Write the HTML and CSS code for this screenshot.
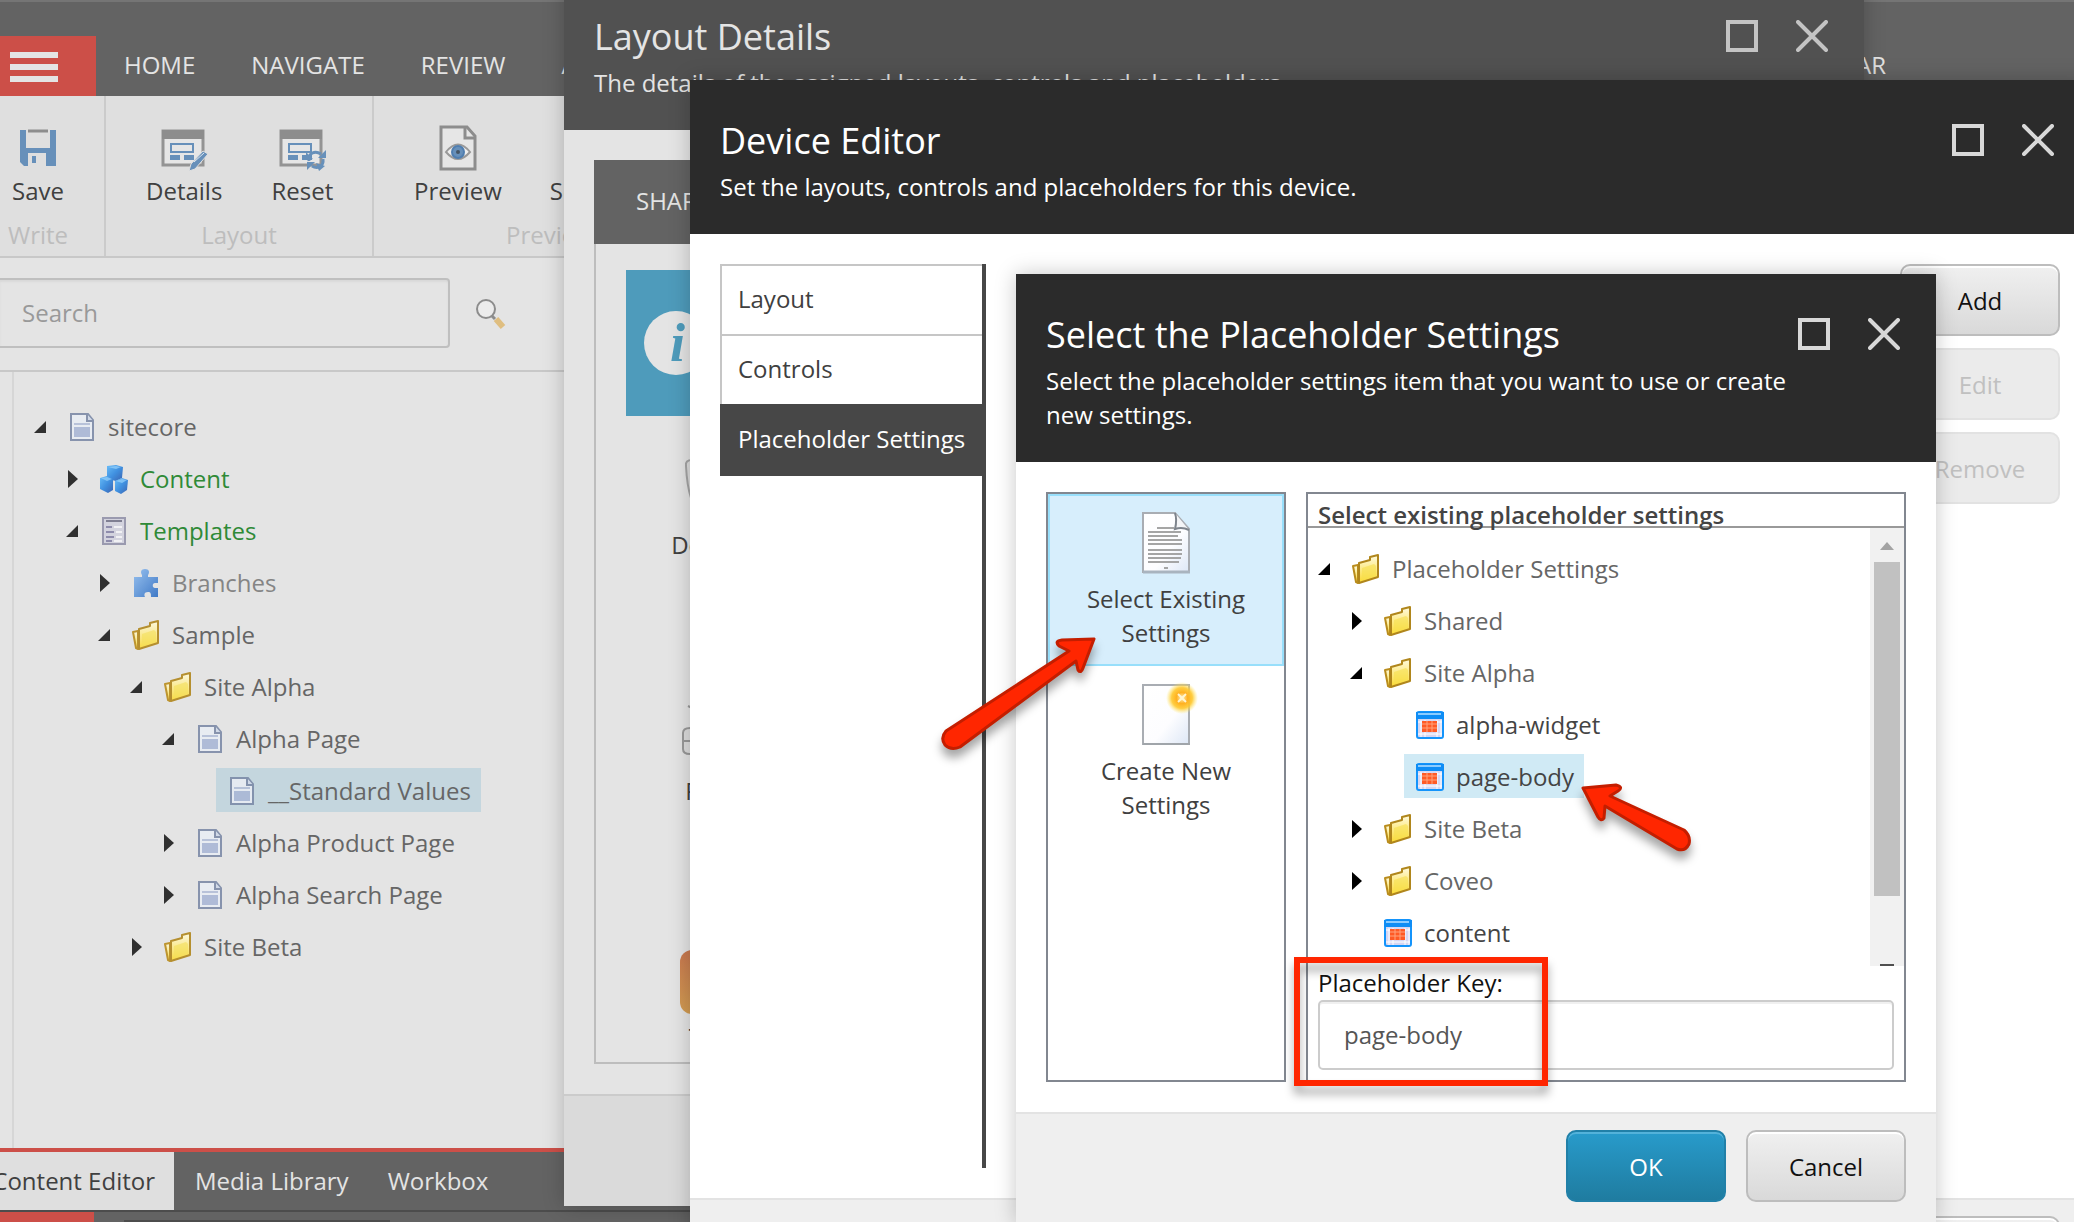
FILE: index.html
```html
<!DOCTYPE html>
<html lang="en">
<head>
<meta charset="utf-8">
<title>Content Editor</title>
<link rel="stylesheet" href="styles.css">
</head>
<body>
<svg class="sprite" aria-hidden="true">
  <defs>
    <linearGradient id="gold" x1="0" y1="0" x2="0" y2="1"><stop offset="0" stop-color="#fffbe0"/><stop offset="1" stop-color="#fbd92e"/></linearGradient>
    <linearGradient id="sheet" x1="0" y1="0" x2="1" y2="1"><stop offset="0" stop-color="#fff"/><stop offset=".6" stop-color="#fdfdff"/><stop offset="1" stop-color="#dde7f6"/></linearGradient>
    <linearGradient id="cube" x1="0" y1="0" x2="1" y2="1"><stop offset="0" stop-color="#5cb8fa"/><stop offset=".5" stop-color="#2f88e0"/><stop offset="1" stop-color="#2a56ac"/></linearGradient>
    <linearGradient id="piece" x1="0" y1="0" x2="1" y2="1"><stop offset="0" stop-color="#8fbdf0"/><stop offset="1" stop-color="#2f6fc4"/></linearGradient>
    <radialGradient id="glow"><stop offset="0" stop-color="#fff3c0"/><stop offset=".35" stop-color="#ffb020"/><stop offset=".65" stop-color="#ffc82c" stop-opacity=".9"/><stop offset="1" stop-color="#ffe96a" stop-opacity="0"/></radialGradient>
    <linearGradient id="amber" x1="0" y1="0" x2="0" y2="1"><stop offset="0" stop-color="#c8784f"/><stop offset="1" stop-color="#d29c52"/></linearGradient>
  </defs>
  <symbol id="open" viewBox="0 0 12 18"><path d="M12 3v12H0z"/></symbol>
  <symbol id="closed" viewBox="0 0 12 18"><path d="M2 0v18l10-9z"/></symbol>
  <symbol id="page" viewBox="0 0 32 32"><path d="M5 3h17l5 6v20H5z" fill="#e9edf4" stroke="#7d8ba8" stroke-width="2"/><path d="M21 3v7h6" fill="#cfd8e8" stroke="#7d8ba8" stroke-width="2"/><path d="M8 13h16" stroke="#b4bfd8" stroke-width="2"/><path d="M8 16h16v10H8z" fill="#aab7d6"/></symbol>
  <symbol id="folder" viewBox="0 0 32 32"><path d="M3 13l5-1v18l-2-1z" fill="url(#gold)" stroke="#b98c1c" stroke-width="2" stroke-linejoin="round"/><path d="M9 10l11-3V4l8-2v22L9 30z" fill="url(#gold)" stroke="#b0861c" stroke-width="2" stroke-linejoin="round"/><path d="M12 15l12-4 2 2v10l-14 4z" fill="#f7df4c" opacity=".6"/></symbol>
  <symbol id="placeholder" viewBox="2 0 32 32"><rect x="5" y="3" width="26" height="26" rx="2" fill="#d6d6f2" stroke="#1494fb" stroke-width="2"/><path d="M4 3h28v7H4z" fill="#0f8df5"/><path d="M6 4h23v2H6z" fill="#8cccff"/><path d="M9 11v17M13 11v17M25 11v17M29 11v17M6 13h24M6 25h24" stroke="#fff" stroke-width="1"/><path d="M10 12h15v11H10z" fill="#ff5a26"/><path d="M15 12v11M20 12v11M10 15h15M10 19h15" stroke="#ffa27c"/></symbol>
  <symbol id="cubes" viewBox="0 0 32 32"><path d="M9 3l9-1 7 2-1 11-6 3-9-2z" fill="url(#cube)"/><path d="M2 15l7-2 6 3v11l-5 3-8-4z" fill="url(#cube)"/><path d="M17 18l7-3 6 2-1 10-6 4-6-3z" fill="url(#cube)"/><path d="M10 4l8-1 5 1-5 2zM3 15l6-1 5 2-5 2zM18 18l6-2 5 1-5 3z" fill="#8fd0ff" opacity=".7"/></symbol>
  <symbol id="template" viewBox="0 0 32 32"><path d="M5 3h22v26H5z" fill="#d2d2de" stroke="#9392aa" stroke-width="2"/><path d="M8 6h16" stroke="#75758a" stroke-width="2"/><path d="M8 12h6M8 17h8M8 22h8M8 26h6" stroke="#8583a6" stroke-width="2"/><path d="M16 12h8M18 17h6M18 22h6M16 26h8" stroke="#f3f3f6" stroke-width="2"/></symbol>
  <symbol id="puzzle" viewBox="0 0 32 32"><path d="M4 10h8V8c-2-3-1-6 3-6s5 3 3 6v2h10v6h-3c-3 0-3 5 0 5h3v9h-7c0-3 0-5-3-5-4 0-4 3-3 5H4z" fill="url(#piece)"/></symbol>
  <symbol id="save" viewBox="0 0 48 48"><path d="M6 6h36v36H10l-4-4z" fill="#6790ba"/><path d="M12 6h24v18H12zM14 29h18v13H14z" fill="#dfdfdf"/><path d="M14 7h20" stroke="#8d8d8d" stroke-width="3"/><path d="M18 32h4v7h-4zM32 28h3v14h-3z" fill="#6790ba"/></symbol>
  <symbol id="layout" viewBox="0 0 48 48"><path d="M3 7h40v34H3z" fill="#e6e6e6" stroke="#949494" stroke-width="3"/><path d="M2 6h42v9H2z" fill="#8d8d8d"/><path d="M11 20h22v8H11z" fill="#e6e6e6" stroke="#6790ba" stroke-width="2"/><path d="M10 31h10v5H10zM24 31h10v5H24z" fill="#6790ba"/></symbol>
  <symbol id="pencil" viewBox="0 0 48 48"><path d="M43 27l5 3-13 15-6 2 2-7z" fill="#6790ba" stroke="#dfdfdf" stroke-width="1"/><path d="M34 38l10-9" stroke="#dfe8f0"/></symbol>
  <symbol id="refresh" viewBox="0 0 48 48"><path d="M31 37c-1-8 6-11 12-7M45 35c1 8-6 10-11 7" fill="none" stroke="#6790ba" stroke-width="3"/><path d="M40 34h8v-8zM37 38h-8v8zM28 28l7 7-7 1zM41 47l-3-8 9 3z" fill="#6790ba"/></symbol>
  <symbol id="preview" viewBox="0 0 48 48"><path d="M7 3h26l8 9v33H7z" fill="#e6e6e6" stroke="#8d8d8d" stroke-width="3"/><path d="M31 3v11h10" fill="none" stroke="#8d8d8d" stroke-width="3"/><path d="M12 28q12-15 24 0-12 14-24 0z" fill="#eee" stroke="#999" stroke-width="2"/><circle cx="24" cy="28" r="6" fill="#6790ba" stroke="#4f7eb0" stroke-width="2"/><circle cx="24" cy="28" r="2" fill="#456"/></symbol>
  <symbol id="lens" viewBox="0 0 32 32"><circle cx="12" cy="12" r="9" fill="#ececec" stroke="#8c8c8c" stroke-width="2"/><path d="M22 22l7 8" stroke="#dfbe80" stroke-width="6"/><path d="M18 19l3 3" stroke="#8c8c8c" stroke-width="3"/></symbol>
  <symbol id="max" viewBox="0 0 32 32"><path d="M2 2h28v28H2z" fill="none" stroke="currentColor" stroke-width="4"/></symbol>
  <symbol id="close" viewBox="0 0 32 32"><path d="M2 2l28 28M30 2L2 30" fill="none" stroke="currentColor" stroke-width="4" stroke-linecap="round"/></symbol>
  <symbol id="existing" viewBox="0 0 64 64"><path d="M9 3h32l14 16v43H9z" fill="url(#sheet)" stroke="#a9adb3" stroke-width="2"/><path d="M9 62h47" stroke="#a9b4bf" stroke-width="3"/><path d="M41 3c2 6 1 12 0 16 6-2 10-1 14 1" fill="#f4f5f7" stroke="#7e848c" stroke-width="2"/><path d="M23 18h17M14 22h33M14 26h30M14 30h34M14 34h34M14 40h34M14 44h34M14 48h33M14 52h31M30 58h4" stroke="#a5a5a5" stroke-width="2"/></symbol>
  <symbol id="create" viewBox="0 0 64 64"><path d="M9 3h46v59H9z" fill="url(#sheet)" stroke="#a9adb3" stroke-width="2"/><path d="M9 62h47" stroke="#a0a5aa" stroke-width="2"/><circle cx="48" cy="16" r="16" fill="url(#glow)"/><path d="M44 12l8 8M52 12l-8 8" stroke="#fff5d0" stroke-width="2"/></symbol>
</svg>

<div class="screen">
<div class="app">
  <header class="topbar">
    <button class="menu" aria-label="Menu"><span></span><span></span><span></span></button>
    <nav class="nav">
      <a href="#">HOME</a><a href="#">NAVIGATE</a><a href="#">REVIEW</a><a href="#">ANALYZE</a>
      <a class="last" href="#">MY TOOLBAR</a>
    </nav>
  </header>

  <div class="ribbon">
    <div class="group write">
      <div class="tools"><button class="tool"><svg><use href="#save"/></svg>Save</button></div>
      <div class="caption">Write</div>
    </div>
    <div class="group arrange">
      <div class="tools">
        <button class="tool"><svg><use href="#layout"/><use href="#pencil"/></svg>Details</button>
        <button class="tool"><svg><use href="#layout"/><use href="#refresh"/></svg>Reset</button>
      </div>
      <div class="caption">Layout</div>
    </div>
    <div class="group publish">
      <div class="tools">
        <button class="tool"><svg><use href="#preview"/></svg>Preview</button>
        <button class="tool"><svg></svg>Schedule</button>
      </div>
      <div class="caption">Preview</div>
    </div>
  </div>

  <form class="search">
    <input type="text" placeholder="Search" aria-label="Search">
    <button type="button" aria-label="Search"><svg><use href="#lens"/></svg></button>
  </form>

  <main class="content">
    <ul class="tree">
      <li><div class="row"><svg class="toggle"><use href="#open"/></svg><a href="#"><svg><use href="#page"/></svg>sitecore</a></div>
        <ul>
          <li><div class="row"><svg class="toggle"><use href="#closed"/></svg><a class="green" href="#"><svg><use href="#cubes"/></svg>Content</a></div></li>
          <li><div class="row"><svg class="toggle"><use href="#open"/></svg><a class="green" href="#"><svg><use href="#template"/></svg>Templates</a></div>
            <ul>
              <li><div class="row"><svg class="toggle"><use href="#closed"/></svg><a class="muted" href="#"><svg><use href="#puzzle"/></svg>Branches</a></div></li>
              <li><div class="row"><svg class="toggle"><use href="#open"/></svg><a href="#"><svg><use href="#folder"/></svg>Sample</a></div>
                <ul>
                  <li><div class="row"><svg class="toggle"><use href="#open"/></svg><a href="#"><svg><use href="#folder"/></svg>Site Alpha</a></div>
                    <ul>
                      <li><div class="row"><svg class="toggle"><use href="#open"/></svg><a href="#"><svg><use href="#page"/></svg>Alpha Page</a></div>
                        <ul>
                          <li><div class="row"><svg class="toggle"></svg><a class="selected" href="#"><svg><use href="#page"/></svg>__Standard Values</a></div></li>
                        </ul>
                      </li>
                      <li><div class="row"><svg class="toggle"><use href="#closed"/></svg><a href="#"><svg><use href="#page"/></svg>Alpha Product Page</a></div></li>
                      <li><div class="row"><svg class="toggle"><use href="#closed"/></svg><a href="#"><svg><use href="#page"/></svg>Alpha Search Page</a></div></li>
                    </ul>
                  </li>
                  <li><div class="row"><svg class="toggle"><use href="#closed"/></svg><a href="#"><svg><use href="#folder"/></svg>Site Beta</a></div></li>
                </ul>
              </li>
            </ul>
          </li>
        </ul>
      </li>
    </ul>
  </main>

  <nav class="apps">
    <a class="current" href="#">Content Editor</a><a href="#">Media Library</a><a href="#">Workbox</a>
  </nav>
  <div class="status"><span class="start"></span><span class="task"></span></div>
</div>

<section class="dialog details dimmed" aria-label="Layout Details">
  <header class="head">
    <div class="titles"><h2>Layout Details</h2><p>The details of the assigned layouts, controls and placeholders.</p></div>
    <div class="controls"><button aria-label="Maximize"><svg><use href="#max"/></svg></button><button aria-label="Close"><svg><use href="#close"/></svg></button></div>
  </header>
  <div class="body">
    <div class="shared">
      <div class="strip"><button>SHARED LAYOUT</button></div>
      <div class="pane">
        <div class="info"><svg viewBox="0 0 64 64"><circle cx="32" cy="32" r="32" fill="#e4e4e4"/></svg><i>i</i></div>
        <ul class="devices">
          <li><svg viewBox="0 0 64 64"><path d="M54 2H12Q5 2 6 8q1 20 5 32h43z" fill="#ddd" stroke="#a5a5a5" stroke-width="2"/></svg>Default</li>
          <li><svg viewBox="0 0 64 64"><path d="M8 2l6 3M14 24h36v26H10q-7 0-7-5V29q0-5 7-5zM3 37h40" fill="#ddd" stroke="#999" stroke-width="2"/></svg>Print</li>
          <li><svg viewBox="0 0 64 64"><rect width="64" height="64" rx="12" fill="url(#amber)"/></svg>Test</li>
        </ul>
      </div>
    </div>
  </div>
  <footer class="foot"></footer>
</section>

<section class="dialog device" aria-label="Device Editor">
  <header class="head">
    <div class="titles"><h2>Device Editor</h2><p>Set the layouts, controls and placeholders for this device.</p></div>
    <div class="controls"><button aria-label="Maximize"><svg><use href="#max"/></svg></button><button aria-label="Close"><svg><use href="#close"/></svg></button></div>
  </header>
  <div class="body">
    <nav class="sections"><button>Layout</button><button>Controls</button><button class="active">Placeholder Settings</button></nav>
    <div class="actions"><button class="btn">Add</button><button class="btn" disabled>Edit</button><button class="btn" disabled>Remove</button></div>
  </div>
  <footer class="foot"><button class="btn" aria-label="Cancel"></button></footer>
</section>

<section class="dialog picker" aria-label="Select the Placeholder Settings">
  <header class="head">
    <div class="titles"><h2>Select the Placeholder Settings</h2><p>Select the placeholder settings item that you want to use or create new settings.</p></div>
    <div class="controls"><button aria-label="Maximize"><svg><use href="#max"/></svg></button><button aria-label="Close"><svg><use href="#close"/></svg></button></div>
  </header>
  <div class="body">
    <div class="choices">
      <button class="choice chosen"><svg><use href="#existing"/></svg>Select Existing Settings</button>
      <button class="choice"><svg><use href="#create"/></svg>Create New Settings</button>
    </div>
    <div class="existing">
      <div class="legend">Select existing placeholder settings</div>
      <div class="scroller">
        <ul class="tree">
          <li><div class="row"><svg class="toggle"><use href="#open"/></svg><a href="#"><svg><use href="#folder"/></svg>Placeholder Settings</a></div>
            <ul>
              <li><div class="row"><svg class="toggle"><use href="#closed"/></svg><a href="#"><svg><use href="#folder"/></svg>Shared</a></div></li>
              <li><div class="row"><svg class="toggle"><use href="#open"/></svg><a href="#"><svg><use href="#folder"/></svg>Site Alpha</a></div>
                <ul>
                  <li><div class="row"><svg class="toggle"></svg><a class="dark" href="#"><svg><use href="#placeholder"/></svg>alpha-widget</a></div></li>
                  <li><div class="row"><svg class="toggle"></svg><a class="dark selected" href="#"><svg><use href="#placeholder"/></svg>page-body</a></div></li>
                </ul>
              </li>
              <li><div class="row"><svg class="toggle"><use href="#closed"/></svg><a href="#"><svg><use href="#folder"/></svg>Site Beta</a></div></li>
              <li><div class="row"><svg class="toggle"><use href="#closed"/></svg><a href="#"><svg><use href="#folder"/></svg>Coveo</a></div></li>
              <li><div class="row"><svg class="toggle"></svg><a class="dark" href="#"><svg><use href="#placeholder"/></svg>content</a></div></li>
            </ul>
          </li>
        </ul>
        <div class="scrollbar"><span class="up"></span><span class="thumb"></span><span class="down"></span></div>
      </div>
      <div class="key">
        <label for="key">Placeholder Key:</label>
        <input id="key" type="text" value="page-body">
      </div>
    </div>
  </div>
  <footer class="foot"><button class="btn primary">OK</button><button class="btn">Cancel</button></footer>
</section>

<svg class="marks" width="2074" height="1222" viewBox="0 0 2074 1222" aria-hidden="true">
  <g fill="#ff2600" stroke="#c41e00" stroke-width="3" stroke-linejoin="round">
    <path d="M1094 639L1062 640Q1054 641 1059 646L1069 651L946 731Q940 738 945 745Q951 751 960 747L1076 661L1078 670Q1081 674 1083 668Z"/>
    <path d="M1583 788L1616 785Q1624 787 1618 791L1610 796L1684 830Q1691 836 1689 844Q1685 852 1677 849L1605 806L1604 818Q1601 822 1598 817Z"/>
  </g>
  <rect x="1297" y="960" width="248" height="123" fill="none" stroke="#ff2600" stroke-width="6"/>
</svg>
</div>
</body>
</html>
```

FILE: styles.css
```css
* { box-sizing: border-box; }

body {
  margin: 0;
  font: 24px/34px "Open Sans", "Noto Sans", sans-serif;
  color: #404040;
  background: #e4e4e4;
}

h2, p, ul { margin: 0; padding: 0; font-weight: 400; }
ul { list-style: none; }
a { color: inherit; text-decoration: none; }
button, input { font: inherit; color: inherit; margin: 0; padding: 0; border: 0; background: none; }
svg { display: block; flex: none; }
.sprite { position: absolute; width: 0; height: 0; }

/* Editor shell */
.screen { position: relative; height: 100vh; overflow: hidden; }
.app { display: flex; flex-direction: column; height: 100%; }

.topbar {
  display: flex;
  align-items: flex-end;
  height: 96px;
  flex: none;
  border-top: 2px solid #757575;
  background: #636363;
  color: #e4e4e4;
}
.menu {
  display: flex;
  flex-direction: column;
  justify-content: center;
  gap: 6px;
  width: 96px;
  height: 60px;
  padding: 2px 0 0 10px;
  background: #cc4f48;
}
.menu span { width: 48px; height: 6px; background: #e4e4e4; }
.nav { display: flex; flex: 1; }
.nav a { padding: 12px 28px 14px; }
.nav .last { margin-left: auto; margin-right: 160px; }

.ribbon {
  display: flex;
  flex: none;
  background: #dfdfdf;
  border-bottom: 2px solid #c8c8c8;
}
.group {
  display: flex;
  flex-direction: column;
  gap: 10px;
  padding: 28px 0 4px;
  border-right: 2px solid #cbcbcb;
}
.tools { display: flex; gap: 2px; padding-left: 20px; }
.tool {
  display: flex;
  flex-direction: column;
  align-items: center;
  gap: 2px;
  min-width: 116px;
  padding: 0 20px;
}
.tool svg { width: 48px; height: 48px; }
.caption { text-align: center; color: #bdbdbd; }
.write { width: 106px; padding-right: 28px; }
.write .tools { padding: 0; justify-content: center; }
.write .tool { min-width: 0; padding: 0; }
.arrange { width: 268px; }
.publish { width: 354px; }
.publish .tools { gap: 8px; }

.search {
  display: flex;
  flex: none;
  align-items: center;
  gap: 24px;
  padding: 20px 0 22px;
  border-bottom: 2px solid #c8c8c8;
}
.search input {
  width: 450px;
  height: 70px;
  padding: 0 0 2px 22px;
  border: 2px solid #bfbfbf;
  border-left: 0;
  border-radius: 0 4px 4px 0;
  box-shadow: inset 0 2px 2px #d9d9d9;
}
.search input::placeholder { color: #999; opacity: 1; }
.search svg { width: 32px; height: 32px; }

.content {
  flex: 1;
  min-height: 0;
  margin-left: 12px;
  padding: 28px 20px 0;
  border-left: 2px solid #d6d6d6;
}

/* Trees */
.tree { fill: #303030; color: #666; }
.tree ul { padding-left: 32px; }
.row { display: flex; align-items: center; height: 52px; }
.toggle { width: 12px; height: 18px; margin: 2px 10px 0 0; }
.row a {
  display: flex;
  align-items: center;
  gap: 10px;
  height: 44px;
  padding: 2px 10px 0;
  white-space: nowrap;
}
.row a svg { width: 32px; height: 32px; }
.content .row a svg { opacity: .9; }
.green { color: #2f8a37; }
.muted { color: #858585; }
.dark { color: #444; }
.content .selected { background: #c4d6de; }
.picker .selected { background: #d0eaf5; }

/* Application tabs and status line */
.apps {
  display: flex;
  flex: none;
  border-top: 4px solid #cc4f48;
  border-bottom: 2px solid #4c4c4c;
  background: #636363;
  color: #e4e4e4;
}
.apps a { padding: 12px 0 12px 21px; margin-right: 18px; white-space: nowrap; }
.apps .current {
  display: flex;
  justify-content: flex-end;
  width: 174px;
  padding-right: 19px;
  margin-right: 0;
  overflow: hidden;
  background: #dfdfdf;
  color: #404040;
}
.status { display: flex; flex: none; gap: 30px; height: 10px; background: #636363; }
.start { width: 94px; background: #cc4f48; }
.task { width: 266px; border-bottom: 2px solid #4c4c4c; }

/* Dialog windows */
.dialog {
  position: absolute;
  display: flex;
  flex-direction: column;
  background: #fff;
  box-shadow: 0 0 20px rgba(0, 0, 0, .22);
}
.details { left: 564px; right: 210px; top: -24px; bottom: 16px; }
.device { left: 690px; right: -16px; top: 80px; bottom: -88px; }
.picker { left: 1016px; right: 138px; top: 274px; bottom: -2px; }

.head {
  display: flex;
  flex: none;
  justify-content: space-between;
  gap: 8px;
  padding: 36px 36px 30px 30px;
  background: #2b2b2b;
  color: #fff;
}
.head h2 { font-size: 36px; line-height: 50px; margin-bottom: 4px; }
.controls { display: flex; gap: 38px; padding-top: 8px; color: #d8d8d8; }
.controls button { height: 32px; }
.controls svg { width: 32px; height: 32px; }
.body { display: flex; flex: 1; min-height: 0; padding: 30px; }
.foot {
  display: flex;
  flex: none;
  justify-content: flex-end;
  gap: 20px;
  height: 112px;
  padding: 16px 30px 22px;
  border-top: 2px solid #e3e3e3;
  background: #efefef;
}

.dimmed { background: #e4e4e4; }
.dimmed .head { background: #515151; color: #e4e4e4; }
.dimmed .controls { color: #c4c4c4; }
.dimmed .foot { background: #dadada; border-color: #cbcbcb; }

.btn {
  width: 160px;
  height: 72px;
  padding-top: 2px;
  border: 2px solid #bdbdbd;
  border-radius: 10px;
  background: linear-gradient(#f0f0f0, #d9d9d9);
  box-shadow: inset 0 2px #fff;
  color: #111;
}
.btn:disabled { border-color: #e2e2e2; background: #ebebeb; box-shadow: none; color: #c0c0c0; }
.primary {
  border-color: #2180a8;
  background: linear-gradient(#289bcb, #1f7ca0);
  box-shadow: inset 0 2px #53b2da;
  color: #fff;
}

/* Layout details */
.shared { display: flex; flex-direction: column; flex: 1; }
.strip { flex: none; height: 84px; padding: 24px 42px; background: #636363; color: #e4e4e4; }
.pane {
  flex: 1;
  min-height: 0;
  overflow: hidden;
  padding: 26px 30px 0;
  border: 2px solid #bdbdbd;
  border-top: 0;
}
.info {
  display: flex;
  align-items: center;
  height: 146px;
  padding-left: 18px;
  background: #4e9bbb;
}
.info svg { width: 64px; height: 64px; }
.info i { margin-left: -38px; font: italic bold 54px/64px "Liberation Serif", serif; color: #4e9bbb; }
.devices { display: flex; flex-direction: column; align-items: flex-start; gap: 142px; padding: 42px 46px; }
.devices li { display: flex; flex-direction: column; align-items: center; gap: 6px; width: 80px; }
.devices svg { width: 64px; height: 64px; }

/* Device editor */
.device .body { justify-content: space-between; }
.sections { width: 266px; border-right: 4px solid #474747; }
.sections button {
  display: block;
  width: 100%;
  height: 70px;
  padding: 0 16px 2px;
  border: 2px solid #c6c6c6;
  border-width: 2px 0 0 2px;
  text-align: left;
  white-space: nowrap;
}
.sections .active { height: 72px; padding-bottom: 4px; border-color: #474747; background: #474747; color: #fff; }
.actions { display: flex; flex-direction: column; gap: 12px; }

/* Placeholder settings picker */
.picker .body { gap: 20px; }
.choices { width: 240px; border: 2px solid #828790; }
.choice {
  display: flex;
  flex-direction: column;
  align-items: center;
  gap: 8px;
  width: 100%;
  height: 172px;
  padding: 14px 30px;
  border: 2px solid transparent;
}
.choice svg { width: 64px; height: 64px; }
.chosen { border-color: #98dffb; background: #d7eefc; }

.existing { display: flex; flex-direction: column; flex: 1; border: 2px solid #828790; }
.legend {
  height: 34px;
  padding: 4px 10px 0;
  border-bottom: 2px solid #999;
  color: #444;
  font-weight: 600;
}
.scroller { display: flex; flex: 1; min-height: 0; }
.scroller .tree { flex: 1; padding: 14px 10px 0; fill: #000; }
.scrollbar {
  display: flex;
  flex-direction: column;
  align-items: center;
  width: 34px;
  padding-top: 14px;
  background: #f1f1f1;
}
.up { border: 7px solid transparent; border-top: 0; border-bottom: 8px solid #a3a3a3; }
.thumb { width: 26px; height: 334px; margin-top: 12px; background: #c1c1c1; }
.down { width: 14px; height: 2px; margin-top: auto; background: #505050; }
.key { padding: 0 10px 10px; color: #111; }
.key label { display: block; }
.key input {
  display: block;
  width: 100%;
  height: 70px;
  padding: 0 24px 2px;
  border: 2px solid #ccc;
  border-radius: 5px;
  box-shadow: inset 0 2px #f0f0f0;
  color: #555;
}

/* Callouts drawn over the windows */
.marks {
  position: absolute;
  left: 0;
  top: 0;
  pointer-events: none;
  filter: drop-shadow(0 8px 5px rgba(0, 0, 0, .35));
}
```
